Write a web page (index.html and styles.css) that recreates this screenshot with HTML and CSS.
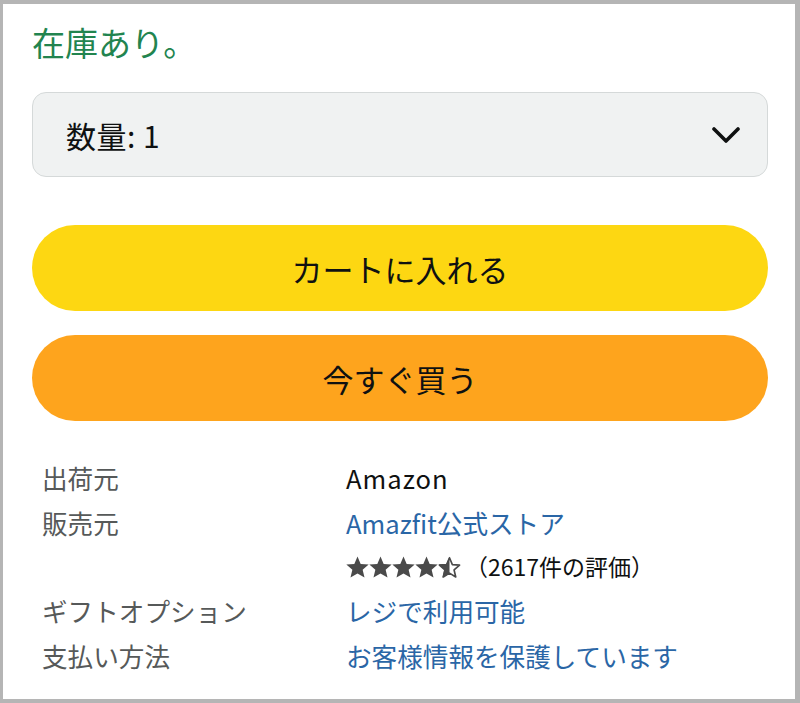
FILE: index.html
```html
<!DOCTYPE html>
<html lang="ja">
<head>
<meta charset="utf-8">
<link rel="stylesheet" href="styles.css">
</head>
<body>
<div class="panel">
  <div class="stock">在庫あり。</div>
  <div class="select">
    <span class="select-label">数量: 1</span>
    <svg class="chevron" viewBox="0 0 28 16" width="28" height="16"><polyline points="2,2 14,14 26,2" fill="none" stroke="#0f1111" stroke-width="3.6" stroke-linecap="round" stroke-linejoin="round"/></svg>
  </div>
  <div class="btn btn-cart">カートに入れる</div>
  <div class="btn btn-buy">今すぐ買う</div>
  <div class="info">
    <div class="label">出荷元</div>
    <div class="value latin">Amazon</div>
    <div class="label">販売元</div>
    <div class="value">
      <div class="link">Amazfit公式ストア</div>
      <div class="rating">
        <span class="stars">
          <svg viewBox="1.5 1.8 21 20" width="23" height="22"><path d="M12 2.2l2.9 6.8 7.3.6-5.5 4.8 1.7 7.1L12 17.7l-6.4 3.8 1.7-7.1-5.5-4.8 7.3-.6z" fill="#4a4a4a"/></svg>
          <svg viewBox="1.5 1.8 21 20" width="23" height="22"><path d="M12 2.2l2.9 6.8 7.3.6-5.5 4.8 1.7 7.1L12 17.7l-6.4 3.8 1.7-7.1-5.5-4.8 7.3-.6z" fill="#4a4a4a"/></svg>
          <svg viewBox="1.5 1.8 21 20" width="23" height="22"><path d="M12 2.2l2.9 6.8 7.3.6-5.5 4.8 1.7 7.1L12 17.7l-6.4 3.8 1.7-7.1-5.5-4.8 7.3-.6z" fill="#4a4a4a"/></svg>
          <svg viewBox="1.5 1.8 21 20" width="23" height="22"><path d="M12 2.2l2.9 6.8 7.3.6-5.5 4.8 1.7 7.1L12 17.7l-6.4 3.8 1.7-7.1-5.5-4.8 7.3-.6z" fill="#4a4a4a"/></svg>
          <svg viewBox="1.5 1.8 21 20" width="23" height="22"><defs><clipPath id="half"><rect x="0" y="0" width="12" height="24"/></clipPath></defs><path d="M12 2.2l2.9 6.8 7.3.6-5.5 4.8 1.7 7.1L12 17.7l-6.4 3.8 1.7-7.1-5.5-4.8 7.3-.6z" fill="#4a4a4a" clip-path="url(#half)"/><path d="M12 3.4l2.6 6.2 6.6.55-5 4.35 1.5 6.4L12 17.4l-5.7 3.5 1.5-6.4-5-4.35 6.6-.55z" fill="none" stroke="#4a4a4a" stroke-width="1.5" stroke-linejoin="round"/></svg>
        </span>
        <span class="count">（2617件の評価）</span>
      </div>
    </div>
    <div class="label">ギフトオプション</div>
    <div class="value link">レジで利用可能</div>
    <div class="label">支払い方法</div>
    <div class="value link">お客様情報を保護しています</div>
  </div>
</div>
</body>
</html>
```

FILE: styles.css
```css
html {
  background: #ffffff;
}
body {
  margin: 0;
  height: 703px;
  box-sizing: border-box;
  border-style: solid;
  border-color: #b5b5b5;
  border-width: 4px 5px 4px 3px;
  font-family: "Noto Sans CJK JP", "Noto Sans", sans-serif;
  color: #0f1111;
  overflow: hidden;
}
.panel {
  padding: 18px 27px 0 29px;
  display: flex;
  flex-direction: column;
}
.stock {
  font-size: 33px;
  line-height: 40px;
  color: #22844f;
}
.select {
  margin-top: 30px;
  height: 85px;
  box-sizing: border-box;
  background: #f0f2f2;
  border: 1.5px solid #d5d9d9;
  border-radius: 14px;
  display: flex;
  align-items: center;
  justify-content: space-between;
  padding: 0 27px 0 33px;
}
.select-label {
  font-size: 30px;
  line-height: 40px;
  letter-spacing: 0.5px;
}
.chevron {
  display: block;
}
.btn {
  height: 86px;
  border-radius: 43px;
  display: flex;
  align-items: center;
  justify-content: center;
  font-size: 31px;
  color: #0f1111;
}
.btn-cart {
  margin-top: 48px;
  background: #fdd712;
}
.btn-buy {
  margin-top: 24px;
  background: #fea41d;
}
.info {
  margin-top: 34px;
  padding-left: 10px;
  display: grid;
  grid-template-columns: 304px 1fr;
  font-size: 25.6px;
  line-height: 45px;
}
.label {
  color: #565959;
}
.value {
  color: #0f1111;
}
.latin {
  letter-spacing: 1px;
}
.link {
  color: #2a66a6;
}
.rating {
  display: flex;
  align-items: center;
  height: 43px;
}
.stars {
  display: flex;
}
.stars svg {
  display: block;
}
.count {
  font-size: 23px;
  color: #0f1111;
  margin-left: 4px;
  line-height: 43px;
}
```
